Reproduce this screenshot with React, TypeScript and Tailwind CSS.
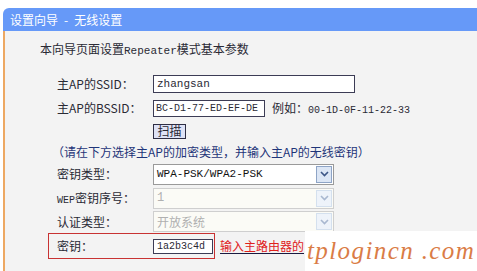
import React from "react";

const cjk = { fontFamily: '"Noto Sans CJK SC", "Noto Sans", sans-serif' };
const mono = { fontFamily: '"Liberation Mono", "DejaVu Sans Mono", monospace' };

function Chevron({ color }: { color: string }) {
  return (
    <svg width="9" height="6" viewBox="0 0 9 6">
      <path d="M1 1 L4.5 4.5 L8 1" fill="none" stroke={color} strokeWidth="1.6" />
    </svg>
  );
}

function Select({ value, disabled }: { value: string; disabled?: boolean }) {
  return (
    <div
      className={
        "flex h-[21px] w-[181px] items-center border " +
        (disabled ? "border-[#cfcfcf] bg-[#fbfbf6]" : "border-[#9a9a9a] bg-white")
      }
    >
      <div
        className={"flex-1 pl-[3px] text-[12px] leading-none " + (disabled ? "text-[#b0b0b0]" : "text-[#111]")}
        style={disabled && /\d/.test(value) ? mono : disabled ? cjk : { ...mono, fontSize: 11 }}
      >
        {value}
      </div>
      <div
        className={
          "mr-[1px] flex h-[17px] w-[16px] items-center justify-center border " +
          (disabled ? "border-[#d4e0ee] bg-[#eef3fa]" : "border-[#8ea4c6] bg-[#dce6f5]")
        }
      >
        <Chevron color={disabled ? "#a9b8d0" : "#3d5686"} />
      </div>
    </div>
  );
}

export default function App() {
  return (
    <div className="relative h-[271px] w-[477px] overflow-hidden bg-white" style={cjk}>
      <div className="pl-[3px] pt-[8px]">
        <div className="flex h-[23px] items-center gap-[6px] rounded-tl-[6px] bg-[#6699f8] pl-[7px] text-[12px] text-white">
          <span>设置向导</span>
          <span>-</span>
          <span>无线设置</span>
        </div>
        <div className="h-[240px] border-l-2 border-[#eda862] bg-[#f3f3f3] text-[12px] text-[#2a2a35]">
          <div className="pl-[35px] pt-[10px] leading-[16px]">
            本向导页面设置<span style={mono} className="text-[11px]">Repeater</span>模式基本参数
          </div>
          <div className="mt-[13px] flex h-[24px] items-center">
            <div className="w-[148px] pl-[52px]">主AP的SSID：</div>
            <div className="flex h-[18px] w-[202px] items-center border border-[#3c3c55] bg-white pl-[3px] text-[11px]" style={mono}>
              zhangsan
            </div>
          </div>
          <div className="flex h-[24px] items-center">
            <div className="w-[148px] pl-[52px]">主AP的BSSID：</div>
            <div className="flex h-[17px] w-[112px] items-center border border-[#3c3c55] bg-white pl-[2px] text-[10px]" style={mono}>
              BC-D1-77-ED-EF-DE
            </div>
            <div className="ml-[7px]">
              例如：<span style={mono} className="text-[10px]">00-1D-0F-11-22-33</span>
            </div>
          </div>
          <div className="flex h-[22px] items-center">
            <div className="w-[148px]" />
            <div className="flex h-[15px] w-[33px] items-center justify-center border border-[#2e2e44] bg-[#dfe3f6] leading-none">
              扫描
            </div>
          </div>
          <div className="flex h-[20px] items-center pl-[47px] text-[#1f3579]">
            （请在下方选择主AP的加密类型，并输入主AP的无线密钥）
          </div>
          <div className="flex h-[24px] items-center">
            <div className="w-[148px] pl-[52px]">密钥类型：</div>
            <Select value="WPA-PSK/WPA2-PSK" />
          </div>
          <div className="flex h-[24px] items-center">
            <div className="w-[148px] pl-[52px]">
              <span style={mono} className="text-[10px]">WEP</span>密钥序号：
            </div>
            <Select value="1" disabled />
          </div>
          <div className="flex h-[23px] items-center">
            <div className="w-[148px] pl-[52px]">认证类型：</div>
            <Select value="开放系统" disabled />
          </div>
          <div className="flex items-center">
            <div className="ml-[43px] flex h-[26px] w-[167px] items-center border border-[#c83232]">
              <div className="w-[104px] pl-[8px]">密钥：</div>
              <div className="flex h-[15px] w-[60px] items-center border border-[#3c3c55] bg-white pl-[3px] text-[10px]" style={mono}>
                1a2b3c4d
              </div>
            </div>
            <div className="ml-[5px] whitespace-nowrap border-b border-[#1a1a40] leading-[14px] text-[#e0201c]">
              输入主路由器的
            </div>
          </div>
        </div>
      </div>
      <div className="absolute left-[305px] top-[231px] flex h-[40px] w-[172px] items-center bg-white pl-[2px]">
        <span
          className="whitespace-nowrap text-[25px] italic tracking-[1.4px] text-[#da7c46]"
          style={{ fontFamily: '"Liberation Serif", "DejaVu Serif", serif' }}
        >
          tplogincn .com
        </span>
      </div>
    </div>
  );
}
